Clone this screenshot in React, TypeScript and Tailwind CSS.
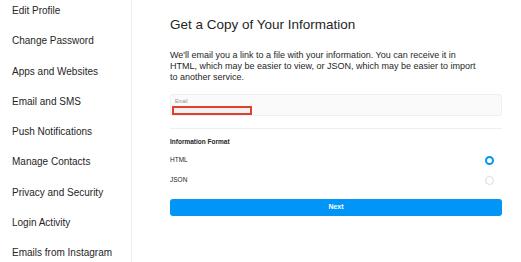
import React from 'react';

const menu = [
  'Edit Profile',
  'Change Password',
  'Apps and Websites',
  'Email and SMS',
  'Push Notifications',
  'Manage Contacts',
  'Privacy and Security',
  'Login Activity',
  'Emails from Instagram',
];

const Radio: React.FC<{ checked?: boolean }> = ({ checked }) =>
  checked ? (
    <span className="w-[9px] h-[9px] rounded-full border-[2.5px] border-[#0095f6] bg-white" />
  ) : (
    <span className="w-[9px] h-[9px] rounded-full border border-[#dbdbdb] bg-white" />
  );

export default function App() {
  return (
    <div className="w-[521px] h-[262px] overflow-hidden bg-white flex font-['Liberation_Sans',Arial,sans-serif] text-[#262626]">
      <aside className="w-[132px] shrink-0 border-r border-[#efefef] flex flex-col -mt-[4px]">
        {menu.map((item) => (
          <div key={item} className="h-[30.25px] shrink-0 flex items-center pl-[12px] text-[10px] leading-none">
            {item}
          </div>
        ))}
      </aside>

      <main className="flex-1 pl-[38px] pr-[19px] pt-[17px]">
        <h1 className="text-[13.5px] leading-[16px]">Get a Copy of Your Information</h1>

        <p className="mt-[17px] text-[9px] leading-[11px]">
          We'll email you a link to a file with your information. You can receive it in
          <br />
          HTML, which may be easier to view, or JSON, which may be easier to import
          <br />
          to another service.
        </p>

        <div className="mt-[11px] h-[22px] bg-[#fafafa] border border-[#efefef] rounded-[3px] pl-[4px] pt-[3px]">
          <div className="text-[5px] leading-[6px] text-[#8e8e8e]">Email</div>
          <div className="ml-[-3px] mt-[2px] w-[80px] h-[9px] border-2 border-[#e0412f] bg-[#f2f2f2]" />
        </div>

        <div className="mt-[12px] border-t border-[#efefef]" />

        <div className="mt-[9px] text-[6.5px] leading-[8px] font-bold">Information Format</div>

        <div className="mt-[8px] h-[12px] flex items-center justify-between pr-[8px] text-[6.5px]">
          <span>HTML</span>
          <Radio checked />
        </div>
        <div className="mt-[8px] h-[12px] flex items-center justify-between pr-[8px] text-[6.5px]">
          <span>JSON</span>
          <Radio />
        </div>

        <button className="mt-[13px] w-full h-[17px] rounded-[3px] bg-[#0095f6] text-white text-[7px] font-bold flex items-center justify-center">
          Next
        </button>
      </main>
    </div>
  );
}
